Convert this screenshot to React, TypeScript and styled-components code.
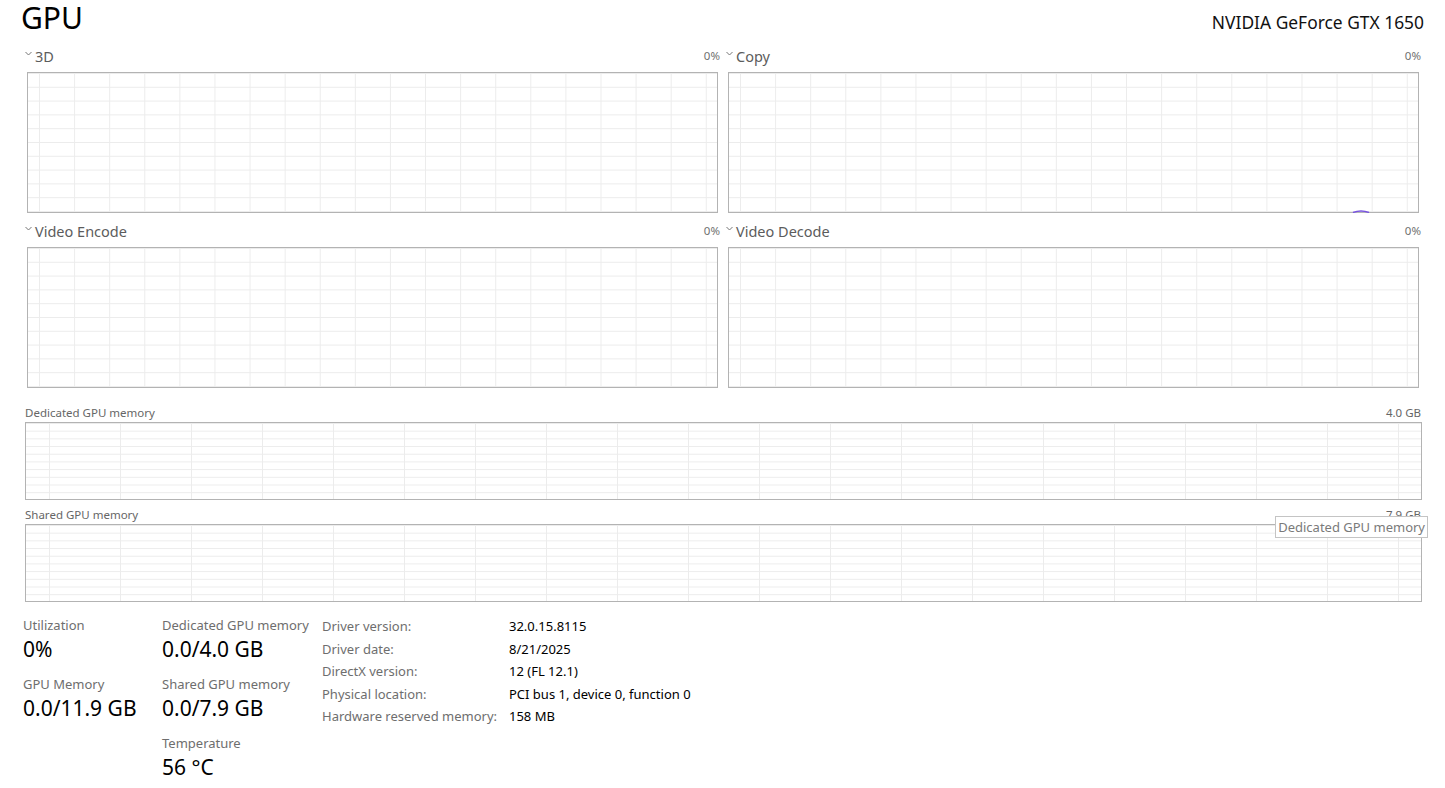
import React from 'react';
import styled, { createGlobalStyle } from 'styled-components';

const GlobalStyle = createGlobalStyle`
  html, body {
    margin: 0;
    padding: 0;
    background: #ffffff;
  }
  body {
    font-family: 'Noto Sans', 'Open Sans', sans-serif;
    color: #000000;
  }
`;

type TEngine = { name: string; value: string; blip?: boolean };
type TStat = { label: string; value: string };

const aEngines: TEngine[] = [
  { name: '3D', value: '0%' },
  { name: 'Copy', value: '0%', blip: true },
  { name: 'Video Encode', value: '0%' },
  { name: 'Video Decode', value: '0%' },
];

const aStatsLeft: TStat[] = [
  { label: 'Utilization', value: '0%' },
  { label: 'GPU Memory', value: '0.0/11.9 GB' },
];

const aStatsMid: TStat[] = [
  { label: 'Dedicated GPU memory', value: '0.0/4.0 GB' },
  { label: 'Shared GPU memory', value: '0.0/7.9 GB' },
  { label: 'Temperature', value: '56 °C' },
];

const aInfo: TStat[] = [
  { label: 'Driver version:', value: '32.0.15.8115' },
  { label: 'Driver date:', value: '8/21/2025' },
  { label: 'DirectX version:', value: '12 (FL 12.1)' },
  { label: 'Physical location:', value: 'PCI bus 1, device 0, function 0' },
  { label: 'Hardware reserved memory:', value: '158 MB' },
];

const Chevron = () => (
  <ChevronIcon width='7' height='5' viewBox='0 0 7 5'>
    <polyline points='0.5,1 3.5,4 6.5,1' fill='none' stroke='#777' strokeWidth='1' />
  </ChevronIcon>
);

const App = () => {
  return (
    <Page>
      <GlobalStyle />
      <Header>
        <Title>GPU</Title>
        <DeviceName>NVIDIA GeForce GTX 1650</DeviceName>
      </Header>

      <EngineGrid>
        {aEngines.map((oEngine) => (
          <EngineCell key={oEngine.name}>
            <EngineHead>
              <EngineName>
                <Chevron />
                {oEngine.name}
              </EngineName>
              <Percent>{oEngine.value}</Percent>
            </EngineHead>
            <Graph $col={35.1} $row={13.8} $colOffset={11} $height={141}>
              {oEngine.blip && (
                <Blip width='18' height='4' viewBox='0 0 18 4'>
                  <path d='M1 3.5 Q9 0.5 17 3.5' fill='none' stroke='#7752e0' strokeWidth='1.5' />
                </Blip>
              )}
            </Graph>
          </EngineCell>
        ))}
      </EngineGrid>

      <MemorySection>
        <MemoryHead>
          <SmallLabel>Dedicated GPU memory</SmallLabel>
          <SmallLabel>4.0 GB</SmallLabel>
        </MemoryHead>
        <Graph $col={71} $row={7.7} $colOffset={23} $height={78} />
        <MemoryHead $tight>
          <SmallLabel>Shared GPU memory</SmallLabel>
          <SmallLabel>7.9 GB</SmallLabel>
        </MemoryHead>
        <Graph $col={71} $row={7.7} $colOffset={23} $height={78} />
        <Tooltip>Dedicated GPU memory</Tooltip>
      </MemorySection>

      <Stats>
        <StatColumn $width={139}>
          {aStatsLeft.map((oStat) => (
            <StatBlock key={oStat.label}>
              <StatLabel>{oStat.label}</StatLabel>
              <StatValue>{oStat.value}</StatValue>
            </StatBlock>
          ))}
        </StatColumn>
        <StatColumn $width={160}>
          {aStatsMid.map((oStat) => (
            <StatBlock key={oStat.label}>
              <StatLabel>{oStat.label}</StatLabel>
              <StatValue>{oStat.value}</StatValue>
            </StatBlock>
          ))}
        </StatColumn>
        <InfoTable>
          {aInfo.map((oRow) => (
            <React.Fragment key={oRow.label}>
              <InfoKey>{oRow.label}</InfoKey>
              <InfoValue>{oRow.value}</InfoValue>
            </React.Fragment>
          ))}
        </InfoTable>
      </Stats>
    </Page>
  );
};

const Page = styled.div`
  width: 1445px;
  height: 788px;
  box-sizing: border-box;
  padding: 0 23px 0 25px;
  overflow: hidden;
`;

const Header = styled.div`
  display: flex;
  justify-content: space-between;
  align-items: baseline;
  height: 47px;
`;

const Title = styled.h1`
  margin: -2px 0 0 -4px;
  font-weight: 400;
  font-size: 30px;
  line-height: 40px;
  color: #000000;
`;

const DeviceName = styled.div`
  font-size: 17.4px;
  color: #111111;
  margin-right: -2px;
`;

const EngineGrid = styled.div`
  display: grid;
  grid-template-columns: 696px 696px;
  column-gap: 5px;
  row-gap: 9px;
`;

const EngineCell = styled.div`
  display: flex;
  flex-direction: column;
`;

const EngineHead = styled.div`
  display: flex;
  justify-content: space-between;
  align-items: flex-start;
  height: 25px;
  line-height: 18px;
`;

const EngineName = styled.div`
  display: flex;
  align-items: center;
  font-size: 14.5px;
  color: #5c5c5c;
`;

const ChevronIcon = styled.svg`
  margin: -6px 3px 0 0;
`;

const Percent = styled.div`
  font-size: 11.5px;
  color: #707070;
  margin-right: 1px;
`;

const Graph = styled.div<{ $col: number; $row: number; $colOffset: number; $height: number }>`
  position: relative;
  box-sizing: border-box;
  height: ${(p) => p.$height}px;
  margin: 0 3px 0 2px;
  border: 1px solid #b3b3b3;
  background-color: #ffffff;
  background-image: linear-gradient(to right, #ececec 1px, transparent 1px),
    linear-gradient(to bottom, #ececec 1px, transparent 1px);
  background-size: ${(p) => p.$col}px 100%, 100% ${(p) => p.$row}px;
  background-position: ${(p) => p.$colOffset}px 0, 0 0;
`;

const Blip = styled.svg`
  position: absolute;
  left: 623px;
  bottom: -1px;
`;

const MemorySection = styled.div`
  position: relative;
  margin-top: 14px;

  ${Graph} {
    margin: 0;
  }
`;

const MemoryHead = styled.div<{ $tight?: boolean }>`
  display: flex;
  justify-content: space-between;
  align-items: center;
  height: 20px;
  margin-top: ${(p) => (p.$tight ? 4 : 0)}px;
`;

const SmallLabel = styled.div`
  font-size: 11.5px;
  color: #666666;
  margin-right: 1px;
`;

const Tooltip = styled.div`
  position: absolute;
  top: 114px;
  right: -6px;
  box-sizing: border-box;
  height: 22px;
  padding: 0 2px;
  background: #ffffff;
  border: 1px solid #c4c4c4;
  font-size: 13px;
  line-height: 20px;
  color: #7a7a7a;
`;

const Stats = styled.div`
  display: flex;
  margin-top: 14px;
  margin-left: -2px;
`;

const StatColumn = styled.div<{ $width: number }>`
  width: ${(p) => p.$width}px;
  display: flex;
  flex-direction: column;
  gap: 11px;
`;

const StatBlock = styled.div`
  display: flex;
  flex-direction: column;
`;

const StatLabel = styled.div`
  font-size: 13px;
  line-height: 18px;
  color: #6e6e6e;
  white-space: nowrap;
`;

const StatValue = styled.div`
  font-size: 21px;
  line-height: 30px;
  color: #000000;
  white-space: nowrap;
`;

const InfoTable = styled.div`
  display: grid;
  grid-template-columns: 187px auto;
  grid-auto-rows: 22.5px;
  align-items: center;
  margin-top: -1px;
`;

const InfoKey = styled.div`
  font-size: 13px;
  color: #6e6e6e;
  white-space: nowrap;
`;

const InfoValue = styled.div`
  font-size: 13px;
  color: #000000;
  white-space: nowrap;
`;

export default App;
